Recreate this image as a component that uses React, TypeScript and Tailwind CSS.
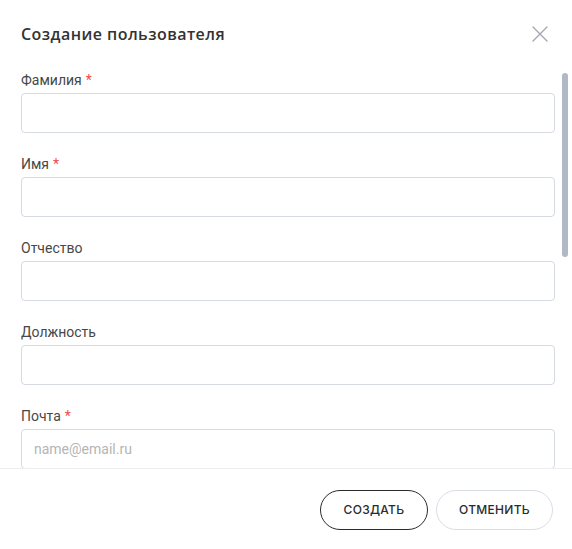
import React from 'react';

interface Field {
  label: string;
  required?: boolean;
  placeholder?: string;
}

const fields: Field[] = [
  { label: 'Фамилия', required: true },
  { label: 'Имя', required: true },
  { label: 'Отчество' },
  { label: 'Должность' },
  { label: 'Почта', required: true, placeholder: 'name@email.ru' },
];

function CloseIcon() {
  return (
    <svg width="16" height="16" viewBox="0 0 16 16" fill="none">
      <path d="M1 1L15 15M15 1L1 15" stroke="#a3a7b0" strokeWidth="1.4" strokeLinecap="round" />
    </svg>
  );
}

export default function App() {
  return (
    <div
      className="w-[572px] h-[549px] bg-white flex flex-col overflow-hidden"
      style={{ fontFamily: 'Roboto, "Noto Sans", sans-serif' }}
    >
      <div className="h-[60px] shrink-0 flex items-center justify-between pl-[21px] pr-[24px] pt-[7px]">
        <h2
          className="text-[16px] font-semibold text-[#333] tracking-[0.45px]"
          style={{ fontFamily: '"Open Sans", "Noto Sans", sans-serif' }}
        >
          Создание пользователя
        </h2>
        <button className="w-[16px] h-[16px] flex items-center justify-center">
          <CloseIcon />
        </button>
      </div>

      <div className="relative flex-1 min-h-0 overflow-hidden pl-[21px] pr-[17px] pt-[12px]">
        {fields.map((f) => (
          <div key={f.label} className="mb-[23px]">
            <label className="block h-[16px] leading-[16px] text-[14px] text-[#474747] mb-[5px]">
              {f.label}
              {f.required && <span className="text-[#f04b4b] ml-[4px]">*</span>}
            </label>
            <input
              className="block w-full h-[40px] border border-[#d5d9e2] rounded-[4px] px-[12px] text-[14px] text-[#333] placeholder:text-[#b5b5b5] outline-none"
              placeholder={f.placeholder}
            />
          </div>
        ))}
        <div className="absolute right-[4px] top-[13px] w-[6px] h-[184px] rounded-full bg-[#b1b8c6]" />
      </div>

      <div
        className="h-[81px] shrink-0 border-t border-[#eceef2] flex items-center justify-end gap-[8px] pr-[19px] pt-[1px]"
        style={{ fontFamily: 'Inter, "Noto Sans", sans-serif' }}
      >
        <button className="h-[40px] w-[108px] rounded-full border border-[#2b2b2b] text-[12px] font-medium tracking-[0.3px] text-[#2b2b2b]">
          СОЗДАТЬ
        </button>
        <button className="h-[40px] w-[117px] rounded-full border border-[#d9dde5] text-[12px] font-medium tracking-[0.3px] text-[#2b2b2b]">
          ОТМЕНИТЬ
        </button>
      </div>
    </div>
  );
}
